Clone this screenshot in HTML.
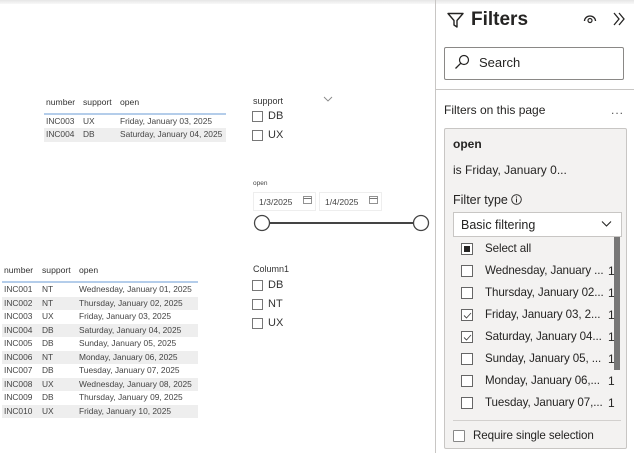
<!DOCTYPE html>
<html><head><meta charset="utf-8"><style>
*{margin:0;padding:0;box-sizing:border-box}
body{width:634px;height:453px;background:#fff;font-family:"Liberation Sans",sans-serif;position:relative;overflow:hidden;color:#252423}
.a{position:absolute;white-space:nowrap}
.t{font-size:8.6px;color:#333}
.row{position:absolute;height:13.5px;font-size:8.4px;color:#444;line-height:13.5px}
.row span{position:absolute}
.cb{position:absolute;width:11px;height:11px;border:1px solid #777;background:#fff}
.fcb{position:absolute;width:12px;height:12px;border:1px solid #666;background:#fff}
.ft{position:absolute;font-size:11.6px;color:#252423;white-space:nowrap;letter-spacing:-0.1px}
.n{position:absolute;left:608px;font-size:12px;color:#252423}
</style></head><body>
<div class="a" style="left:0;top:0;width:634px;height:4px;background:linear-gradient(#e6e6e6,#f8f8f8)"></div>

<div class="a t" style="left:46px;top:97px">number</div>
<div class="a t" style="left:83px;top:97px">support</div>
<div class="a t" style="left:120px;top:97px">open</div>
<div class="a" style="left:44px;top:113px;width:182px;height:2px;background:#b4cdea"></div>
<div class="row" style="left:44px;top:115px;width:182px"><span style="left:2px">INC003</span><span style="left:39px">UX</span><span style="left:76px">Friday, January 03, 2025</span></div>
<div class="row" style="left:44px;top:128px;width:182px;background:#eee"><span style="left:2px">INC004</span><span style="left:39px">DB</span><span style="left:76px">Saturday, January 04, 2025</span></div>

<div class="a" style="left:253px;top:96px;font-size:9px;color:#333">support</div>
<svg class="a" style="left:323px;top:96px" width="10" height="7"><path d="M1 1l4 4 4-4" fill="none" stroke="#888" stroke-width="0.9"/></svg>
<div class="cb" style="left:252px;top:111px"></div><div class="a" style="left:268px;top:110px;font-size:11px;color:#333">DB</div>
<div class="cb" style="left:252px;top:130px"></div><div class="a" style="left:268px;top:129px;font-size:11px;color:#333">UX</div>

<div class="a" style="left:253px;top:180px;font-size:6.5px;color:#444">open</div>
<div class="a" style="left:253px;top:192px;width:63px;height:19px;border:1px solid #eee;font-size:8.6px;color:#444;padding:4px 0 0 5px">1/3/2025</div>
<div class="a" style="left:319px;top:192px;width:63px;height:19px;border:1px solid #eee;font-size:8.6px;color:#444;padding:4px 0 0 5px">1/4/2025</div>
<svg class="a" style="left:303px;top:196px" width="9" height="8"><rect x="0.5" y="0.5" width="8" height="7" fill="none" stroke="#777" stroke-width="0.8"/><line x1="0.5" y1="2.5" x2="8.5" y2="2.5" stroke="#777"/></svg>
<svg class="a" style="left:369px;top:196px" width="9" height="8"><rect x="0.5" y="0.5" width="8" height="7" fill="none" stroke="#777" stroke-width="0.8"/><line x1="0.5" y1="2.5" x2="8.5" y2="2.5" stroke="#777"/></svg>
<svg class="a" style="left:252px;top:213px" width="180" height="20"><line x1="18" y1="10" x2="162" y2="10" stroke="#444" stroke-width="2"/><circle cx="10" cy="10" r="7.5" fill="#fff" stroke="#444" stroke-width="1.3"/><circle cx="169" cy="10" r="7.5" fill="#fff" stroke="#444" stroke-width="1.3"/></svg>

<div class="a t" style="left:4px;top:265px">number</div>
<div class="a t" style="left:42px;top:265px">support</div>
<div class="a t" style="left:79px;top:265px">open</div>
<div class="a" style="left:2px;top:281px;width:196px;height:2px;background:#b4cdea"></div>
<div class="row" style="left:2px;top:283px;width:196px"><span style="left:2px">INC001</span><span style="left:40px">NT</span><span style="left:77px">Wednesday, January 01, 2025</span></div>
<div class="row" style="left:2px;top:296.5px;width:196px;background:#eee"><span style="left:2px">INC002</span><span style="left:40px">NT</span><span style="left:77px">Thursday, January 02, 2025</span></div>
<div class="row" style="left:2px;top:310px;width:196px"><span style="left:2px">INC003</span><span style="left:40px">UX</span><span style="left:77px">Friday, January 03, 2025</span></div>
<div class="row" style="left:2px;top:323.5px;width:196px;background:#eee"><span style="left:2px">INC004</span><span style="left:40px">DB</span><span style="left:77px">Saturday, January 04, 2025</span></div>
<div class="row" style="left:2px;top:337px;width:196px"><span style="left:2px">INC005</span><span style="left:40px">DB</span><span style="left:77px">Sunday, January 05, 2025</span></div>
<div class="row" style="left:2px;top:350.5px;width:196px;background:#eee"><span style="left:2px">INC006</span><span style="left:40px">NT</span><span style="left:77px">Monday, January 06, 2025</span></div>
<div class="row" style="left:2px;top:364px;width:196px"><span style="left:2px">INC007</span><span style="left:40px">DB</span><span style="left:77px">Tuesday, January 07, 2025</span></div>
<div class="row" style="left:2px;top:377.5px;width:196px;background:#eee"><span style="left:2px">INC008</span><span style="left:40px">UX</span><span style="left:77px">Wednesday, January 08, 2025</span></div>
<div class="row" style="left:2px;top:391px;width:196px"><span style="left:2px">INC009</span><span style="left:40px">DB</span><span style="left:77px">Thursday, January 09, 2025</span></div>
<div class="row" style="left:2px;top:404.5px;width:196px;background:#eee"><span style="left:2px">INC010</span><span style="left:40px">UX</span><span style="left:77px">Friday, January 10, 2025</span></div>

<div class="a" style="left:253px;top:264px;font-size:9px;color:#333">Column1</div>
<div class="cb" style="left:252px;top:280px"></div><div class="a" style="left:268px;top:279px;font-size:11px;color:#333">DB</div>
<div class="cb" style="left:252px;top:299px"></div><div class="a" style="left:268px;top:298px;font-size:11px;color:#333">NT</div>
<div class="cb" style="left:252px;top:318px"></div><div class="a" style="left:268px;top:317px;font-size:11px;color:#333">UX</div>

<div class="a" style="left:435px;top:0;width:1px;height:453px;background:#c8c6c4"></div>
<svg class="a" style="left:447px;top:12px" width="17" height="17"><path d="M1 1.5h15l-6 7v6.5l-3-2v-4.5z" fill="none" stroke="#252423" stroke-width="1.4" stroke-linejoin="round"/></svg>
<div class="a" style="left:471px;top:9px;font-size:19px;font-weight:bold;color:#252423">Filters</div>
<svg class="a" style="left:583px;top:14px" width="14" height="10"><path d="M1.5 7a5.5 5 0 0 1 11 0" fill="none" stroke="#252423" stroke-width="1.3"/><circle cx="7" cy="6.5" r="2" fill="none" stroke="#252423" stroke-width="1.2"/></svg>
<svg class="a" style="left:612px;top:12px" width="14" height="14"><path d="M2 1l5 6-5 6M7 1l5 6-5 6" fill="none" stroke="#252423" stroke-width="1.3"/></svg>
<div class="a" style="left:444px;top:47px;width:180px;height:33px;border:1px solid #8a8886;border-radius:2px;background:#fff"></div>
<svg class="a" style="left:454px;top:54px" width="16" height="16"><circle cx="10" cy="6" r="4.5" fill="none" stroke="#252423" stroke-width="1.2"/><line x1="6.8" y1="9.2" x2="1.5" y2="14.5" stroke="#252423" stroke-width="1.3"/></svg>
<div class="a" style="left:479px;top:55px;font-size:13px;color:#252423">Search</div>
<div class="a" style="left:436px;top:89px;width:198px;height:1px;background:#c8c6c4"></div>
<div class="a" style="left:444px;top:103px;font-size:12px;color:#252423">Filters on this page</div>
<div class="a" style="left:611px;top:103px;font-size:12px;color:#555;letter-spacing:1px">...</div>

<div class="a" style="left:444px;top:128px;width:183px;height:321px;background:#f3f2f1;border:1px solid #c8c6c4;border-radius:2px"></div>
<div class="a" style="left:453px;top:137px;font-size:12px;font-weight:bold;color:#252423">open</div>
<div class="a" style="left:453px;top:163px;font-size:12px;color:#252423">is Friday, January 0...</div>
<div class="a" style="left:453px;top:193px;font-size:12.5px;color:#252423">Filter type</div>
<svg class="a" style="left:511px;top:194px" width="11" height="11"><circle cx="5.5" cy="5.5" r="4.8" fill="none" stroke="#252423" stroke-width="0.9"/><line x1="5.5" y1="4.5" x2="5.5" y2="8.5" stroke="#252423"/><circle cx="5.5" cy="3" r="0.6" fill="#252423"/></svg>
<div class="a" style="left:453px;top:212px;width:169px;height:25px;background:#fff;border:1px solid #c8c6c4;font-size:12.5px;color:#252423;padding:5px 0 0 7px">Basic filtering</div>
<svg class="a" style="left:601px;top:220px" width="11" height="8"><path d="M1 1.5l4.5 4.5 4.5-4.5" fill="none" stroke="#252423" stroke-width="1.1"/></svg>
<div class="a" style="left:614px;top:237px;width:6px;height:133px;background:#777"></div>

<div class="fcb" style="left:461px;top:243px"><div style="position:absolute;left:2px;top:2px;width:6px;height:6px;background:#252423"></div></div>
<div class="ft" style="left:485px;top:242px">Select all</div>
<div class="fcb" style="left:461px;top:265px"></div><div class="ft" style="left:485px;top:264px">Wednesday, January ...</div><div class="n" style="top:264px">1</div>
<div class="fcb" style="left:461px;top:287px"></div><div class="ft" style="left:485px;top:286px">Thursday, January 02...</div><div class="n" style="top:286px">1</div>
<div class="fcb" style="left:461px;top:309px"><svg style="position:absolute;left:1px;top:1px" width="9" height="9"><path d="M1 4.5l2.5 2.5 4.5-5" fill="none" stroke="#444" stroke-width="0.9"/></svg></div><div class="ft" style="left:485px;top:308px">Friday, January 03, 2...</div><div class="n" style="top:308px">1</div>
<div class="fcb" style="left:461px;top:331px"><svg style="position:absolute;left:1px;top:1px" width="9" height="9"><path d="M1 4.5l2.5 2.5 4.5-5" fill="none" stroke="#444" stroke-width="0.9"/></svg></div><div class="ft" style="left:485px;top:330px">Saturday, January 04...</div><div class="n" style="top:330px">1</div>
<div class="fcb" style="left:461px;top:353px"></div><div class="ft" style="left:485px;top:352px">Sunday, January 05, ...</div><div class="n" style="top:352px">1</div>
<div class="fcb" style="left:461px;top:375px"></div><div class="ft" style="left:485px;top:374px">Monday, January 06,...</div><div class="n" style="top:374px">1</div>
<div class="fcb" style="left:461px;top:397px"></div><div class="ft" style="left:485px;top:396px">Tuesday, January 07,...</div><div class="n" style="top:396px">1</div>
<div class="a" style="left:453px;top:420px;width:168px;height:1px;background:#d2d0ce"></div>
<div class="fcb" style="left:453px;top:430px;border-color:#888;border-radius:1px"></div>
<div class="ft" style="left:473px;top:429px">Require single selection</div>
</body></html>
